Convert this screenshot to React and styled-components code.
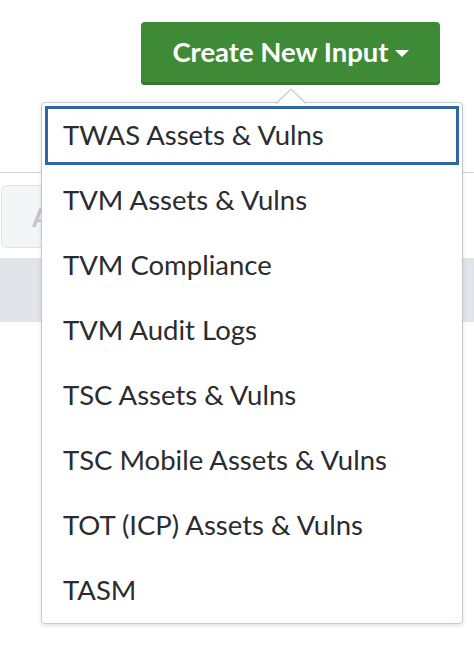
import React from "react";
import styled, { createGlobalStyle } from "styled-components";

const Global = createGlobalStyle`
  html, body { margin: 0; padding: 0; background: #fff; }
  body { font-family: Lato, sans-serif; }
  * { box-sizing: border-box; }
`;

const Page = styled.div`
  position: relative;
  width: 474px;
  height: 668px;
  overflow: hidden;
  background: #fff;
`;

const Toolbar = styled.div`
  display: flex;
  justify-content: flex-end;
  align-items: flex-start;
  height: 173px;
  padding: 22px 34px 0 0;
  border-bottom: 1px solid #cfd1d4;
`;

const CreateButton = styled.button`
  display: flex;
  align-items: center;
  justify-content: center;
  gap: 6px;
  width: 299px;
  height: 63px;
  padding: 0 0 4px;
  border: none;
  border-radius: 4px;
  background: #3e8a37;
  box-shadow: inset 0 -3px 0 #347a2e;
  color: #fff;
  font-family: Lato, sans-serif;
  font-weight: 700;
  font-size: 27.5px;
  cursor: pointer;
`;

const Caret = styled.span`
  width: 0;
  height: 0;
  margin-top: 3px;
  border-left: 7px solid transparent;
  border-right: 7px solid transparent;
  border-top: 7px solid #fff;
`;

const FilterRow = styled.div`
  padding: 12px 0 0 1px;
  height: 85px;
`;

const FilterBox = styled.div`
  display: flex;
  align-items: center;
  width: 120px;
  height: 63px;
  padding-left: 30px;
  border: 1px solid #dfe2e6;
  border-radius: 6px;
  background: #f4f5f7;
  color: #c2c6cc;
  font-size: 27px;
  font-weight: 700;
`;

const Band = styled.div`
  height: 64px;
  background: #e1e4e8;
`;

const Menu = styled.div`
  position: absolute;
  left: 41px;
  top: 102px;
  width: 422px;
  background: #fff;
  border: 1px solid #c3cad3;
  border-radius: 4px;
  box-shadow: 0 2px 4px rgba(0, 0, 0, 0.12);
`;

const Notch = styled.svg`
  position: absolute;
  left: 234px;
  top: -15px;
  width: 30px;
  height: 16px;
  overflow: visible;
`;

const Item = styled.div`
  display: flex;
  align-items: center;
  height: 65px;
  padding: 0 0 2px 21px;
  color: #2a2c2f;
  font-family: Lato, sans-serif;
  font-size: 27.5px;
  outline: ${(p) => (p.$focused ? "3px solid #2f66a3" : "none")};
  outline-offset: -6px;
`;

const items = [
  "TWAS Assets & Vulns",
  "TVM Assets & Vulns",
  "TVM Compliance",
  "TVM Audit Logs",
  "TSC Assets & Vulns",
  "TSC Mobile Assets & Vulns",
  "TOT (ICP) Assets & Vulns",
  "TASM",
];

export default function App() {
  return (
    <Page>
      <Global />
      <Toolbar>
        <CreateButton>
          Create New Input <Caret />
        </CreateButton>
      </Toolbar>
      <FilterRow>
        <FilterBox>All</FilterBox>
      </FilterRow>
      <Band />
      <Menu>
        <Notch viewBox="0 0 30 16">
          <polygon points="0,16 15,1 30,16" fill="#fff" />
          <polyline points="0,15.5 15,1 30,15.5" fill="none" stroke="#c3cad3" strokeWidth="1.2" />
        </Notch>
        {items.map((t, i) => (
          <Item key={t} $focused={i === 0}>
            {t}
          </Item>
        ))}
      </Menu>
    </Page>
  );
}
